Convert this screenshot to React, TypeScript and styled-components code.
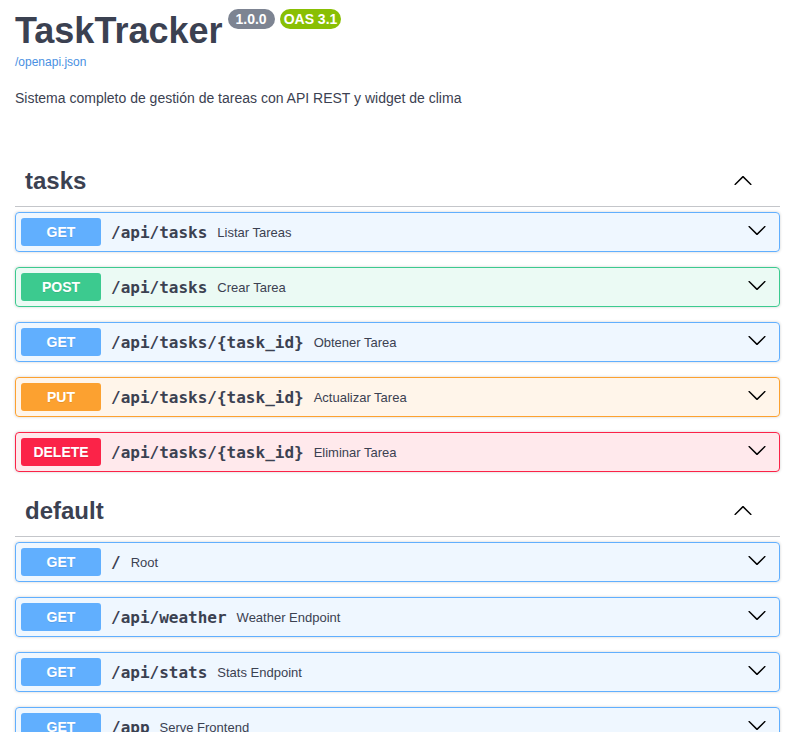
import React from "react";
import styled, { createGlobalStyle } from "styled-components";

const Global = createGlobalStyle`
  html, body { margin: 0; padding: 0; overflow: hidden; background: #fff; }
  body { font-family: "Liberation Sans", Arial, sans-serif; color: #3b4151; }
`;

type Method = "GET" | "POST" | "PUT" | "DELETE";

const colors: Record<Method, { main: string; bg: string }> = {
  GET: { main: "#61affe", bg: "rgba(97,175,254,.1)" },
  POST: { main: "#3cca8f", bg: "rgba(60,202,143,.1)" },
  PUT: { main: "#fca130", bg: "rgba(252,161,48,.1)" },
  DELETE: { main: "#fb2348", bg: "rgba(251,35,72,.1)" },
};

const Page = styled.div`
  padding: 9px 16px 0 15px;
`;

const TitleRow = styled.div`
  display: flex;
  align-items: flex-start;
`;

const Title = styled.h2`
  margin: 1px 0 0 0;
  font-size: 36px;
  line-height: 42px;
  font-weight: 700;
  color: #3b4151;
`;

const Badge = styled.span<{ $bg: string; $pad: number }>`
  display: inline-block;
  margin: 0 0 0 5px;
  height: 20px;
  line-height: 20px;
  padding: 0 ${(p) => p.$pad}px;
  border-radius: 57px;
  background: ${(p) => p.$bg};
  color: #fff;
  font-size: 14px;
  font-weight: 700;
`;

const SpecLink = styled.a`
  display: block;
  margin-top: 3px;
  font-size: 12px;
  line-height: 14px;
  color: #4990e2;
  text-decoration: none;
`;

const Description = styled.p`
  margin: 21px 0 0 0;
  font-size: 14px;
  line-height: 16px;
  color: #3b4151;
`;

const Sections = styled.div`
  margin-top: 51px;
`;

const TagHeader = styled.h3`
  display: flex;
  align-items: center;
  margin: 0 0 5px 0;
  padding: 9px 20px 11px 10px;
  height: 29px;
  border-bottom: 1px solid rgba(59, 65, 81, 0.3);
  font-size: 24px;
  font-weight: 700;
  color: #3b4151;
`;

const TagName = styled.span`
  flex: 1;
`;

const Arrow = styled.svg<{ $lift: number }>`
  width: 20px;
  height: 20px;
  margin-right: 7px;
  margin-bottom: ${(p) => p.$lift}px;
  flex: none;
  fill: #000;
`;

const Op = styled.div<{ $m: Method }>`
  display: flex;
  align-items: center;
  margin: 0 0 15px 0;
  padding: 5px;
  border: 1px solid ${(p) => colors[p.$m].main};
  background: ${(p) => colors[p.$m].bg};
  border-radius: 4px;
  box-shadow: 0 0 3px rgba(0, 0, 0, 0.19);
`;

const MethodBadge = styled.span<{ $m: Method }>`
  min-width: 80px;
  padding: 6px 0;
  line-height: 16px;
  text-align: center;
  border-radius: 3px;
  background: ${(p) => colors[p.$m].main};
  color: #fff;
  font-size: 14px;
  font-weight: 700;
  text-shadow: 0 1px 0 rgba(0, 0, 0, 0.1);
`;

const Path = styled.span`
  padding: 0 10px;
  font-family: "DejaVu Sans Mono", monospace;
  font-size: 16px;
  font-weight: 700;
  color: #3b4151;
`;

const Summary = styled.span`
  flex: 1;
  font-size: 13px;
  color: #3b4151;
`;

const UpArrow = () => (
  <Arrow viewBox="0 0 20 20" $lift={2}>
    <path d="M17.418 14.908c.272.268.709.268.979 0s.271-.701 0-.969l-7.908-7.83c-.27-.268-.707-.268-.979 0l-7.908 7.83c-.27.268-.27.701 0 .969.271.268.709.268.979 0L10 7.767l7.418 7.141z" />
  </Arrow>
);

const DownArrow = () => (
  <Arrow viewBox="0 0 20 20" $lift={5}>
    <path d="M17.418 6.109c.272-.268.709-.268.979 0s.271.701 0 .969l-7.908 7.83c-.27.268-.707.268-.979 0l-7.908-7.83c-.27-.268-.27-.701 0-.969.271-.268.709-.268.979 0L10 13.25l7.418-7.141z" />
  </Arrow>
);

type OpDef = { m: Method; path: string; summary: string };

const sections: { name: string; ops: OpDef[] }[] = [
  {
    name: "tasks",
    ops: [
      { m: "GET", path: "/api/tasks", summary: "Listar Tareas" },
      { m: "POST", path: "/api/tasks", summary: "Crear Tarea" },
      { m: "GET", path: "/api/tasks/{task_id}", summary: "Obtener Tarea" },
      { m: "PUT", path: "/api/tasks/{task_id}", summary: "Actualizar Tarea" },
      { m: "DELETE", path: "/api/tasks/{task_id}", summary: "Eliminar Tarea" },
    ],
  },
  {
    name: "default",
    ops: [
      { m: "GET", path: "/", summary: "Root" },
      { m: "GET", path: "/api/weather", summary: "Weather Endpoint" },
      { m: "GET", path: "/api/stats", summary: "Stats Endpoint" },
      { m: "GET", path: "/app", summary: "Serve Frontend" },
    ],
  },
];

export default function App() {
  return (
    <Page>
      <Global />
      <TitleRow>
        <Title>TaskTracker</Title>
        <Badge $bg="#7d8492" $pad={8}>1.0.0</Badge>
        <Badge $bg="#89bf04" $pad={4}>OAS 3.1</Badge>
      </TitleRow>
      <SpecLink href="#">/openapi.json</SpecLink>
      <Description>Sistema completo de gestión de tareas con API REST y widget de clima</Description>
      <Sections>
        {sections.map((s) => (
          <div key={s.name}>
            <TagHeader>
              <TagName>{s.name}</TagName>
              <UpArrow />
            </TagHeader>
            {s.ops.map((o, i) => (
              <Op key={i} $m={o.m}>
                <MethodBadge $m={o.m}>{o.m}</MethodBadge>
                <Path>{o.path}</Path>
                <Summary>{o.summary}</Summary>
                <DownArrow />
              </Op>
            ))}
          </div>
        ))}
      </Sections>
    </Page>
  );
}
